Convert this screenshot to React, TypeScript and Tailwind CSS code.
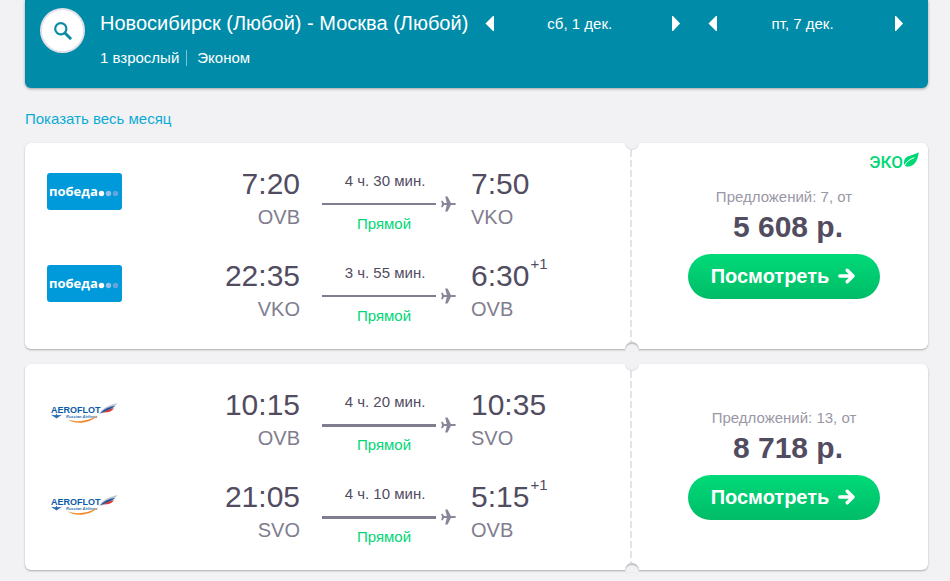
import { ReactNode } from 'react';

type Leg = {
  departTime: string;
  departCode: string;
  duration: string;
  arriveTime: string;
  arriveCode: string;
  nextDay?: boolean;
};

type Ticket = {
  airline: 'pobeda' | 'aeroflot';
  eco?: boolean;
  offers: number;
  price: string;
  legs: Leg[];
};

const tickets: Ticket[] = [
  {
    airline: 'pobeda',
    eco: true,
    offers: 7,
    price: '5 608 р.',
    legs: [
      { departTime: '7:20', departCode: 'OVB', duration: '4 ч. 30 мин.', arriveTime: '7:50', arriveCode: 'VKO' },
      { departTime: '22:35', departCode: 'VKO', duration: '3 ч. 55 мин.', arriveTime: '6:30', arriveCode: 'OVB', nextDay: true },
    ],
  },
  {
    airline: 'aeroflot',
    offers: 13,
    price: '8 718 р.',
    legs: [
      { departTime: '10:15', departCode: 'OVB', duration: '4 ч. 20 мин.', arriveTime: '10:35', arriveCode: 'SVO' },
      { departTime: '21:05', departCode: 'SVO', duration: '4 ч. 10 мин.', arriveTime: '5:15', arriveCode: 'OVB', nextDay: true },
    ],
  },
];

const PobedaLogo = () => (
  <svg width="75" height="37" viewBox="0 0 75 37" role="img" aria-label="Победа">
    <rect width="75" height="37" rx="3" fill="#0099da" />
    <text x="2" y="23" fill="#fff" fontFamily="'Open Sans', 'Noto Sans', sans-serif" fontWeight="700" fontSize="13">
      победа
    </text>
    <circle cx="54.5" cy="20.5" r="2.7" fill="#fff" />
    <circle cx="61.5" cy="20.5" r="2.7" fill="#8fc0ea" />
    <circle cx="68.5" cy="20.5" r="2.7" fill="#64a5de" />
  </svg>
);

const AeroflotLogo = () => (
  <svg width="75" height="37" viewBox="0 0 75 37" role="img" aria-label="Aeroflot">
    <text x="4" y="19" fill="#0b5aa8" fontFamily="'Liberation Sans', Arial, sans-serif" fontWeight="700" fontSize="9">
      AEROFLOT
    </text>
    <text x="19" y="24" fill="#2a6fb3" fontFamily="'Liberation Sans', Arial, sans-serif" fontWeight="700" fontStyle="italic" fontSize="4">
      Russian Airlines
    </text>
    <path d="M4 20.8 L8.5 21.3 L9.5 19.8 L10.5 21.3 L15 20.8 L12 22.8 L9.5 24.5 L7 22.8 Z" fill="#2a6fb3" />
    <path d="M52 20 C55 14 62 11 71 9 C68 12 63 14.5 52 20 Z" fill="#b9c3d3" />
    <path d="M53 19.5 C57 15 62 13 68.5 11.8 C65 15 60 17.5 53 19.5 Z" fill="#25549c" />
    <path d="M54 20 C58 17 62 15 67 14 C65.5 17 62 18.5 57 18.5 Z" fill="#d83b3b" />
    <path d="M20 25 C28 28.5 40 28 51 21.5 C42 30.5 27 30.5 20 25 Z" fill="#f08a2c" />
  </svg>
);

const PlaneIcon = () => (
  <svg width="15" height="16" viewBox="0 0 15 16" fill="#8a8699" aria-hidden="true">
    <path d="M15 8 C15 7.2 14 6.9 13 6.9 H9.9 L6.6 0.5 H4.2 L5.8 6.9 H3.1 L1.7 4.8 H0.1 L1 8 L0.1 11.2 H1.7 L3.1 9.1 H5.8 L4.2 15.5 H6.6 L9.9 9.1 H13 C14 9.1 15 8.8 15 8 Z" />
  </svg>
);

const LeafIcon = () => (
  <svg width="16" height="16" viewBox="0 0 16 16" className="mt-0.5 self-start" aria-hidden="true">
    <path
      d="M15.6 0.3 C15.6 4.5 13.8 10 10.3 12.8 C7.6 14.8 4.4 15 2.6 14.2 C0.9 13 0.3 9.5 2 6.8 C4.6 3 11 3.6 15.6 0.3 Z"
      fill="#00d775"
    />
    <path d="M1.4 14.2 C3 9.8 6.6 7.4 11.4 5.6" fill="none" stroke="#fff" strokeWidth="1" />
  </svg>
);

const ArrowIcon = () => (
  <svg width="17" height="16" viewBox="0 0 17 16" fill="none" stroke="#fff" strokeWidth="3.4" strokeLinecap="round" strokeLinejoin="round" aria-hidden="true">
    <path d="M1.8 8 H14.4 M9.2 2.2 L15 8 L9.2 13.8" />
  </svg>
);

const DateNav = ({ date }: { date: string }) => (
  <div className="flex flex-1 items-center justify-between text-[15px]">
    <button type="button" aria-label="Предыдущий день">
      <svg width="9" height="15" viewBox="0 0 9 15" fill="#fff"><path d="M9 0 V15 H8 L0.5 7.5 L8 0 Z" /></svg>
    </button>
    <span className="pt-0.5 pr-1.5 leading-5">{date}</span>
    <button type="button" aria-label="Следующий день">
      <svg width="9" height="15" viewBox="0 0 9 15" fill="#fff"><path d="M1 0 V15 H2 L9 7.5 L2 0 Z" /></svg>
    </button>
  </div>
);

const SearchHeader = () => (
  <header className="flex gap-[15px] rounded-b-md bg-[#008ca9] pt-2 pr-[25px] pb-5 pl-[15px] text-white shadow-[0_1px_3px_rgba(0,0,0,0.35)]">
    <button
      type="button"
      aria-label="Изменить поиск"
      className="flex size-[45px] shrink-0 items-center justify-center rounded-full border-2 border-[#e2e1ea] bg-white"
    >
      <svg width="18" height="18" viewBox="0 0 18 18" fill="none" stroke="#0b8ba6" strokeLinecap="round" aria-hidden="true">
        <circle cx="6.8" cy="6.8" r="5.6" strokeWidth="2.2" />
        <path d="M11.2 11.2 L16.2 16.2" strokeWidth="3" />
      </svg>
    </button>
    <div className="flex-1">
      <div className="flex h-[30px] items-center gap-[17px]">
        <h1 className="text-xl whitespace-nowrap">Новосибирск (Любой) - Москва (Любой)</h1>
        <div className="flex flex-1 gap-7">
          <DateNav date="сб, 1 дек." />
          <DateNav date="пт, 7 дек." />
        </div>
      </div>
      <div className="mt-2.5 flex items-center text-[15px] leading-5">
        <span>1 взрослый</span>
        <span className="ml-[7px] h-4 border-l border-[#7fc5d4] pl-2.5" />
        <span>Эконом</span>
      </div>
    </div>
  </header>
);

const LegRow = ({ leg, logo, thick }: { leg: Leg; logo: ReactNode; thick: boolean }) => (
  <div className="flex">
    <div className="pt-[7px]">{logo}</div>
    <div className="flex-1 text-right">
      <div className="text-3xl leading-9 text-[#524c61]">{leg.departTime}</div>
      <div className="text-xl leading-[30px] text-[#817d8f]">{leg.departCode}</div>
    </div>
    <div className="ml-[22px] w-[134px] text-[15px] leading-5">
      <div className="pt-[5px] pr-2 text-center text-[#524c61]">{leg.duration}</div>
      <div className="mt-[5px] mb-0.5 flex h-4 items-center gap-[5px]">
        <div className={thick ? 'h-[3px] flex-1 bg-[#817d8f]' : 'h-0.5 flex-1 bg-[#817d8f]'} />
        <PlaneIcon />
      </div>
      <div className="pr-2.5 text-center text-[#00d775]">Прямой</div>
    </div>
    <div className="ml-[15px] w-[161px]">
      <div className="flex text-3xl leading-9 text-[#524c61]">
        {leg.arriveTime}
        {leg.nextDay && <sup className="top-0 ml-px text-[15px] leading-3">+1</sup>}
      </div>
      <div className="text-xl leading-[30px] text-[#817d8f]">{leg.arriveCode}</div>
    </div>
  </div>
);

// Perforated edge between the flight details and the price
const Perforation = () => (
  <div className="pointer-events-none absolute -inset-y-0.5 -left-2 w-4 overflow-hidden">
    <div className="absolute inset-y-[9px] left-1.5 w-0.5 bg-[repeating-linear-gradient(to_bottom,#e4e3e9_0px,#e4e3e9_7px,transparent_7px,transparent_10px)]" />
    <div className="absolute -top-[5px] left-[1px] size-3.5 rounded-full bg-[#f2f2f5] shadow-[inset_0_-1px_1px_#dcdce0]" />
    <div className="absolute -bottom-[5px] left-[1px] size-3.5 rounded-full bg-[#f2f2f5] shadow-[inset_0_2px_1px_#c2c2c6]" />
  </div>
);

const TicketCard = ({ ticket }: { ticket: Ticket }) => {
  const logo = ticket.airline === 'pobeda' ? <PobedaLogo /> : <AeroflotLogo />;

  return (
    <article className="flex rounded-md bg-white shadow-[0_1px_2px_rgba(0,0,0,0.3)]">
      <div className="flex flex-1 flex-col gap-6 py-[23px] pl-[22px]">
        {ticket.legs.map((leg) => (
          <LegRow key={leg.departTime} leg={leg} logo={logo} thick={ticket.airline === 'aeroflot'} />
        ))}
      </div>
      <div className="relative flex w-[296px] flex-col items-center justify-center pb-1.5 pl-2">
        <Perforation />
        {ticket.eco && (
          <div className="absolute top-[7px] right-[9px] flex items-center font-[Roboto] text-[17px] leading-6 font-medium text-[#00d775]">
            ЭКО
            <LeafIcon />
          </div>
        )}
        <div className="text-[15px] leading-5 text-[#9a97a6]">Предложений: {ticket.offers}, от</div>
        <div className="pl-2 text-3xl leading-10 font-bold text-[#524c61]">{ticket.price}</div>
        <button
          type="button"
          className="mt-[7px] flex h-[45px] w-48 items-center justify-center gap-[9px] rounded-full bg-linear-to-b from-[#00da79] to-[#00bc66] pr-0.5 pb-0.5 text-xl font-bold text-white"
        >
          Посмотреть
          <ArrowIcon />
        </button>
      </div>
    </article>
  );
};

const App = () => {
  return (
    <div className="min-h-screen bg-[#f2f2f5] pr-[22px] pl-[25px] font-['Liberation_Sans',Arial,sans-serif]">
      <SearchHeader />
      <a href="#month" className="mt-[21px] mb-3.5 block w-fit text-[15px] leading-5 text-[#0cabd3]">
        Показать весь месяц
      </a>
      <main className="flex flex-col gap-[15px] pb-2.5">
        {tickets.map((ticket) => (
          <TicketCard key={ticket.airline} ticket={ticket} />
        ))}
      </main>
    </div>
  );
};

export default App;
